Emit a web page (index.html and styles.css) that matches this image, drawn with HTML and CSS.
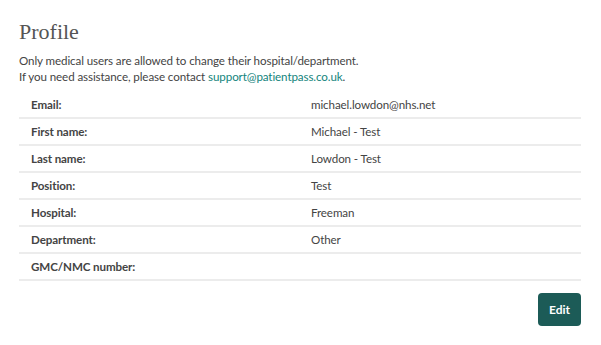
FILE: index.html
```html
<!DOCTYPE html>
<html>
<head>
<meta charset="utf-8">
<link rel="stylesheet" href="styles.css">
</head>
<body>
<main class="page">
  <h1 class="title">Profile</h1>
  <p class="intro">Only medical users are allowed to change their hospital/department.<br>If you need assistance, please contact <a class="link" href="#">support@patientpass.co.uk</a>.</p>
  <table class="details">
    <tr><th>Email:</th><td>michael.lowdon@nhs.net</td></tr>
    <tr><th>First name:</th><td>Michael - Test</td></tr>
    <tr><th>Last name:</th><td>Lowdon - Test</td></tr>
    <tr><th>Position:</th><td>Test</td></tr>
    <tr><th>Hospital:</th><td>Freeman</td></tr>
    <tr><th>Department:</th><td>Other</td></tr>
    <tr><th>GMC/NMC number:</th><td></td></tr>
  </table>
  <div class="actions"><button class="btn">Edit</button></div>
</main>
</body>
</html>
```
FILE: styles.css
```css
html, body { margin: 0; padding: 0; background: #fff; }
.page {
  padding: 0 20px 0 19px;
  font-family: "Lato", "Open Sans", sans-serif;
  color: #444;
}
.title {
  font-family: "Liberation Serif", serif;
  font-weight: normal;
  font-size: 22px;
  color: #555;
  margin: 0;
  padding-top: 18px;
  line-height: 28px;
}
.intro {
  font-size: 11.6px;
  letter-spacing: -0.1px;
  line-height: 16px;
  margin: 7px 0 7px;
}
.link { color: #13847c; text-decoration: none; }
.details {
  width: 100%;
  border-collapse: collapse;
  font-size: 11.6px;
  letter-spacing: -0.1px;
}
.details th, .details td {
  width: 50%;
  text-align: left;
  padding: 0 12px;
  height: 25px;
  border-bottom: 2px solid #ececec;
}
.details td { padding-left: 11px; }
.details th { font-weight: bold; color: #444; }
.details td { color: #444; }
.actions {
  display: flex;
  justify-content: flex-end;
  margin-top: 12px;
}
.btn {
  background: #1c5b57;
  color: #fff;
  border: none;
  border-radius: 4px;
  font-family: "Lato", sans-serif;
  font-weight: bold;
  font-size: 12px;
  width: 43px;
  height: 33px;
  padding: 0;
}
```
